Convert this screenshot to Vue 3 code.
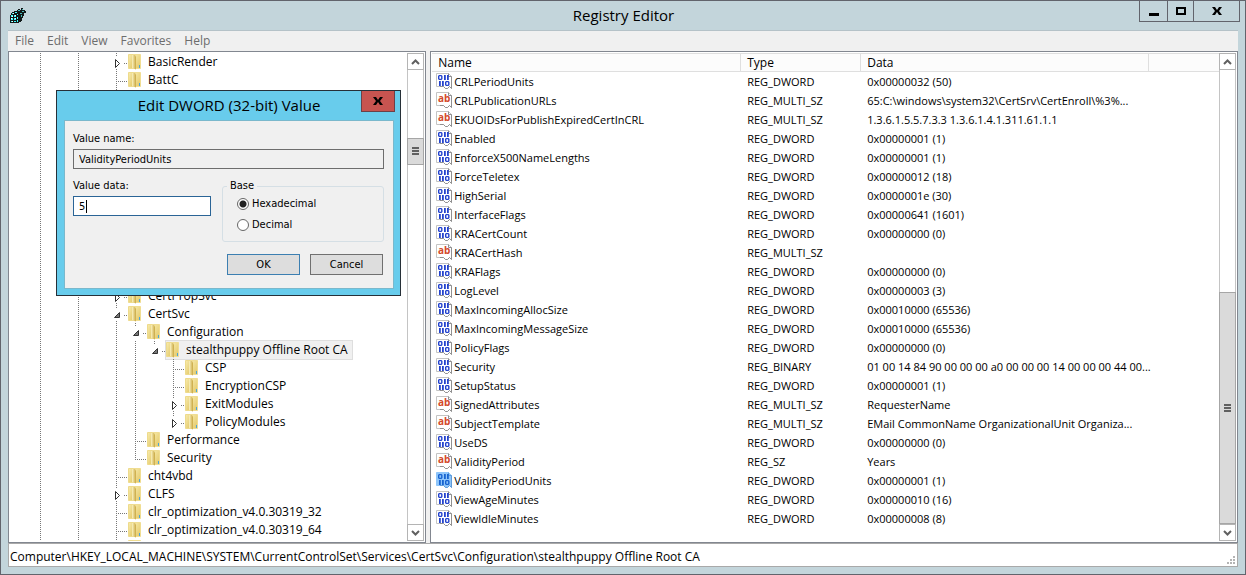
<script setup>
import { ref } from 'vue'

const menus = ['File', 'Edit', 'View', 'Favorites', 'Help']
const address = 'Computer\\HKEY_LOCAL_MACHINE\\SYSTEM\\CurrentControlSet\\Services\\CertSvc\\Configuration\\stealthpuppy Offline Root CA'
const base = ref('hex')
const valueName = ref('ValidityPeriodUnits')
const valueData = ref('5')

// g: one character per ancestor level, '|' where that branch continues
// n: 'c' collapsed, 'e' last collapsed, 'o' open, 't' leaf, 'l' last leaf, 'v' line only
const services = '| | '
const tree = [
  { g: services, n: 'c', t: 'BasicRender' },
  { g: services, n: 't', t: 'BattC' },
  ...Array.from({ length: 11 }, () => ({ g: services, n: 'v', t: '' })),
  { g: services, n: 'c', t: 'CertPropSvc' },
  { g: services, n: 'o', t: 'CertSvc' },
  { g: services + '|', n: 'o', t: 'Configuration' },
  { g: services + '||', n: 'o', t: 'stealthpuppy Offline Root CA', sel: true },
  { g: services + '|| ', n: 't', t: 'CSP' },
  { g: services + '|| ', n: 't', t: 'EncryptionCSP' },
  { g: services + '|| ', n: 'c', t: 'ExitModules' },
  { g: services + '|| ', n: 'e', t: 'PolicyModules' },
  { g: services + '|', n: 't', t: 'Performance' },
  { g: services + '|', n: 'l', t: 'Security' },
  { g: services, n: 't', t: 'cht4vbd' },
  { g: services, n: 'c', t: 'CLFS' },
  { g: services, n: 't', t: 'clr_optimization_v4.0.30319_32' },
  { g: services, n: 't', t: 'clr_optimization_v4.0.30319_64' },
  { g: services, n: 't', t: '' }
]

const D = 'REG_DWORD'
const M = 'REG_MULTI_SZ'
const values = [
  ['CRLPeriodUnits', D, '0x00000032 (50)'],
  ['CRLPublicationURLs', M, '65:C:\\windows\\system32\\CertSrv\\CertEnroll\\%3%...'],
  ['EKUOIDsForPublishExpiredCertInCRL', M, '1.3.6.1.5.5.7.3.3 1.3.6.1.4.1.311.61.1.1'],
  ['Enabled', D, '0x00000001 (1)'],
  ['EnforceX500NameLengths', D, '0x00000001 (1)'],
  ['ForceTeletex', D, '0x00000012 (18)'],
  ['HighSerial', D, '0x0000001e (30)'],
  ['InterfaceFlags', D, '0x00000641 (1601)'],
  ['KRACertCount', D, '0x00000000 (0)'],
  ['KRACertHash', M, ''],
  ['KRAFlags', D, '0x00000000 (0)'],
  ['LogLevel', D, '0x00000003 (3)'],
  ['MaxIncomingAllocSize', D, '0x00010000 (65536)'],
  ['MaxIncomingMessageSize', D, '0x00010000 (65536)'],
  ['PolicyFlags', D, '0x00000000 (0)'],
  ['Security', 'REG_BINARY', '01 00 14 84 90 00 00 00 a0 00 00 00 14 00 00 00 44 00...'],
  ['SetupStatus', D, '0x00000001 (1)'],
  ['SignedAttributes', M, 'RequesterName'],
  ['SubjectTemplate', M, 'EMail CommonName OrganizationalUnit Organiza...'],
  ['UseDS', D, '0x00000000 (0)'],
  ['ValidityPeriod', 'REG_SZ', 'Years'],
  ['ValidityPeriodUnits', D, '0x00000001 (1)'],
  ['ViewAgeMinutes', D, '0x00000010 (16)'],
  ['ViewIdleMinutes', D, '0x00000008 (8)']
]
const isText = (type) => type === M || type === 'REG_SZ'
</script>

<template>
  <div class="window">
    <svg class="defs" width="0" height="0" aria-hidden="true">
      <defs>
        <linearGradient id="fold" x1="0" x2="1">
          <stop offset="0" stop-color="#fbf3c2" />
          <stop offset="1" stop-color="#c9a741" />
        </linearGradient>
        <linearGradient id="sheet" x1="0" x2="1" y2="1">
          <stop offset="0" stop-color="#f8ecae" />
          <stop offset="1" stop-color="#e2c664" />
        </linearGradient>
      </defs>
    </svg>

    <header class="titlebar">
      <svg class="app-icon" width="16" height="16" viewBox="0 0 16 16" shape-rendering="crispEdges">
        <path d="M1 5h1V4h2V3h5v2h2v3h1v5h-1v1H9v1H0V7h1z" fill="#101818" />
        <path d="M2 5h2v1H2zM5 4h2v1H5zM1 7h2v2H1zM4 7h2v2H4zM7 6h2v1H7zM1 10h2v2H1zM4 10h2v2H4zM7 9h1v2H7zM1 13h2v1H1zM4 13h2v1H4zM7 12h1v2H7z" fill="#4ff" />
        <path d="M3 5h1v1H3zM2 8h1v1H2zM5 10h1v1H5zM2 13h1v1H2zM5 7h1v1H5zM1 10h1v1H1z" fill="#fff" />
        <path d="M8 1h2v1h1V0h2v2h2v1h1v2h-2v3h-1v2h-3V7H8V4H7V2h1z" fill="#101818" />
        <path d="M8 2h2v1H8zM12 3h2v1h-2zM10 5h2v1h-2zM11 7h1v2h-1zM12 1h1v1h-1z" fill="#4bbcbc" />
      </svg>
      <h1 class="title">Registry Editor</h1>
      <div class="controls">
        <button class="ctl" aria-label="Minimize"><svg width="10" height="9" viewBox="0 0 10 9"><path d="M0 6h10v3H0z" /></svg></button>
        <button class="ctl mid" aria-label="Maximize"><svg width="10" height="9" viewBox="0 0 10 9"><path d="M0 0h10v8H0zM2 2v4h6V2z" fill-rule="evenodd" /></svg></button>
        <button class="ctl wide" aria-label="Close"><svg width="10" height="9" viewBox="0 0 10 9"><path d="M0 0h3l2 3 2-3h3L7 4l3 4H7L5 5 3 8H0l3-4z" /></svg></button>
      </div>
    </header>

    <nav class="menubar">
      <button v-for="m in menus" :key="m" class="menu">{{ m }}</button>
    </nav>

    <main class="panes">
      <section class="pane tree-pane">
        <ul class="tree">
          <li v-for="(r, i) in tree" :key="i" class="node">
            <svg v-for="(c, k) in r.g.split('')" :key="k" class="guide" width="19" height="18" viewBox="0 0 19 18">
              <path v-if="c === '|' && k < 6" class="dots" d="M9.500 0V18" />
            </svg>
            <svg class="guide" width="21" height="18" viewBox="0 0 21 18">
              <path v-if="r.n === 't' || r.n === 'v'" class="dots" d="M9.500 0V18" />
              <path v-if="r.n === 'l'" class="dots" d="M9.500 0V10" />
              <path v-if="'tl'.includes(r.n)" class="dots" d="M9 10.500H21" />
              <path v-if="'ceo'.includes(r.n)" class="dots" d="M17 10.500H21M9.500 0V4" />
              <path v-if="r.n === 'c' || (r.n === 'o' && !r.g.endsWith('|'))" class="dots" d="M9.500 16V18" />
              <path v-if="'ce'.includes(r.n)" d="M8.500 6.500V14.500L12.500 10.500Z" fill="#fff" stroke="#333" />
              <path v-if="r.n === 'o'" d="M12.500 7.500V12.500H7.500Z" fill="#777" stroke="#333" />
            </svg>
            <span v-if="r.n !== 'v'" class="entry" :class="{ selected: r.sel }">
              <svg class="folder" width="13" height="16" viewBox="0 0 13 16">
                <path d="M5.500 0.500H12.500v14H5.500z" fill="url(#sheet)" stroke="#f0dd92" />
                <path d="M0.500 0.500H5.500v14H0.500z" fill="url(#sheet)" stroke="#eedb8c" />
                <path d="M4 1h3l1 2v12.500L4 14z" fill="url(#fold)" />
                <path d="M11 11h1v3h-1z" fill="#4aa5dc" />
              </svg>
              <span v-if="r.t">{{ r.t }}</span>
            </span>
          </li>
        </ul>
        <div class="scrollbar">
          <button class="arrow" aria-label="Scroll up"><svg width="9" height="6" viewBox="0 0 9 6"><path d="M1 5l3.500-3.500L8 5" /></svg></button>
          <div class="track tree-track"><div class="thumb"><i></i><i></i><i></i></div></div>
          <button class="arrow" aria-label="Scroll down"><svg width="9" height="6" viewBox="0 0 9 6"><path d="M1 1l3.500 3.500L8 1" /></svg></button>
        </div>
      </section>

      <section class="pane list-pane">
        <div class="list">
          <table>
            <colgroup><col class="c-name"><col class="c-type"><col class="c-data"><col></colgroup>
            <thead>
              <tr><th>Name</th><th>Type</th><th>Data</th><th></th></tr>
            </thead>
            <tbody>
              <tr v-for="v in values" :key="v[0]" :class="{ picked: v[0] === valueName }">
                <td>
                  <span class="value">
                    <svg width="16" height="17" viewBox="0 0 16 17">
                      <path class="page" d="M0.500 0.500H12.500L15.500 3.500V15.500L13.500 13.500L11.500 15.500H9.500L7.500 13.500H0.500Z" />
                      <path class="edge" d="M12.500 0.500V3.500H15.500V15.500L13.500 13.500L11.500 15.500H9.500L7.500 13.500H4" />
                      <text v-if="isText(v[1])" x="2" y="10" class="ab">ab</text>
                      <path v-else class="bits" fill-rule="evenodd" d="M2 3l1-1h2.500l1 1v3l-1 1H3l-1-1zM3.400 3.200v2.600h1.700V3.200zM8 2h1.800v5H8zM11 2h1.800v5H11zM3 8h1.800v5H3zM6 8h1.800v5H6zM9 9l1-1h2.500l1 1v3l-1 1H10l-1-1zM10.400 9.200v2.600h1.700V9.200z" />
                    </svg>
                    <span>{{ v[0] }}</span>
                  </span>
                </td>
                <td>{{ v[1] }}</td>
                <td>{{ v[2] }}</td>
                <td></td>
              </tr>
            </tbody>
          </table>
        </div>
        <div class="scrollbar">
          <button class="arrow" aria-label="Scroll up"><svg width="9" height="6" viewBox="0 0 9 6"><path d="M1 5l3.500-3.500L8 5" /></svg></button>
          <div class="track list-track"><div class="thumb"><i></i><i></i><i></i></div></div>
          <button class="arrow" aria-label="Scroll down"><svg width="9" height="6" viewBox="0 0 9 6"><path d="M1 1l3.500 3.500L8 1" /></svg></button>
        </div>
      </section>
    </main>

    <footer class="status">
      <span>{{ address }}</span>
      <svg class="grip" width="10" height="10" viewBox="0 0 10 10" fill="#b4b4b4">
        <path d="M7 0h2v2H7zM7 3h2v2H7zM4 3h2v2H4zM7 6h2v2H7zM4 6h2v2H4zM1 6h2v2H1z" />
      </svg>
    </footer>

    <form class="dialog" role="dialog" aria-labelledby="dlg-title" @submit.prevent>
      <div class="dialog-bar">
        <h2 id="dlg-title">Edit DWORD (32-bit) Value</h2>
        <button type="button" class="dialog-close" aria-label="Close"><svg width="10" height="8" viewBox="0 0 10 8"><path d="M0 0h3l2 3 2-3h3L7 4l3 4H7L5 5 3 8H0l3-4z" /></svg></button>
      </div>
      <div class="dialog-body">
        <label for="vname">Value name:</label>
        <input id="vname" v-model="valueName" class="box" type="text" readonly>
        <div class="columns">
          <div class="data">
            <label for="vdata">Value data:</label>
            <input id="vdata" v-model="valueData" class="box active" type="text">
            <span class="caret"></span>
          </div>
          <fieldset>
            <legend>Base</legend>
            <label class="radio"><input v-model="base" type="radio" name="base" value="hex"><span>Hexadecimal</span></label>
            <label class="radio"><input v-model="base" type="radio" name="base" value="dec"><span>Decimal</span></label>
          </fieldset>
        </div>
        <div class="actions">
          <button type="submit" class="btn primary">OK</button>
          <button type="button" class="btn">Cancel</button>
        </div>
      </div>
    </form>
  </div>
</template>

<style>
html, body, #app { height: 100%; }
body { overflow: hidden; }
</style>

<style scoped>
* { box-sizing: border-box; }
.window {
  position: relative;
  display: flex;
  flex-direction: column;
  height: 100%;
  padding: 0 7px 7px;
  border: 1px solid #62646c;
  background: #c3d5db;
  color: #000;
  font: 12px/18px "Open Sans", "Noto Sans", sans-serif;
}
.defs { position: absolute; }
button, input { font: inherit; color: inherit; margin: 0; }
button { padding: 0; border: 0; background: none; }
h1, h2, ul { margin: 0; padding: 0; font-weight: 400; }

.titlebar { display: flex; align-items: flex-start; height: 29px; flex: none; margin-right: -2px; }
.app-icon { margin: 7px 0 0 2px; }
.title { flex: 1; padding-left: 82px; text-align: center; font-size: 15px; line-height: 28px; }
.controls { display: flex; border: 1px solid #62646c; border-top: 0; }
.ctl { display: flex; align-items: center; justify-content: center; width: 28px; height: 20px; border-right: 1px solid #62646c; }
.ctl.mid { width: 26px; }
.ctl.wide { width: 45px; border-right: 0; }

.menubar { display: flex; gap: 13px; height: 21px; flex: none; padding: 0 7px; border-top: 1px solid #b5c2c8; background: #f0f0f0; }
.menu { color: #6d6d6d; line-height: 20px; }

.panes { display: flex; gap: 4px; flex: 1; min-height: 0; background: #f0f0f0; }
.pane { display: flex; min-width: 0; padding: 1px; border: 1px solid #828790; background: #fff; }
.tree-pane { flex: 0 0 34%; }
.list-pane { flex: 1; }

.tree { flex: 1; min-width: 0; overflow: hidden; padding-left: 21px; list-style: none; }
.node { display: flex; height: 18px; white-space: nowrap; }
.guide { flex: none; }
.dots { fill: none; stroke: #777; stroke-dasharray: 1 1; }
.entry { display: flex; align-items: center; gap: 7px; height: 18px; padding-right: 4px; line-height: 18px; }
.entry.selected { background: #f0f0f0; outline: 1px solid #dedede; }
.folder { flex: none; }

.scrollbar { display: flex; flex-direction: column; flex: none; width: 17px; }
.arrow { display: flex; align-items: center; justify-content: center; height: 17px; flex: none; border: 1px solid #b4b4b4; background: #fff; }
.arrow path { fill: none; stroke: #606060; stroke-width: 2; }
.track { display: flex; flex-direction: column; flex: 1; border: solid #c4c4c4; border-width: 0 1px; }
.thumb { display: flex; flex-direction: column; align-items: center; justify-content: center; gap: 1px; margin: 0 -1px; border: 1px solid #a6a6a6; background: #dadada; }
.thumb i { width: 7px; height: 2px; background: #606060; }
.tree-track::before { content: ""; flex: 68; }
.tree-track::after { content: ""; flex: 361; }
.tree-track .thumb { height: 27px; flex: none; }
.list-track::before { content: ""; flex: 223; }
.list-track .thumb { flex: 232; }

.list { flex: 1; min-width: 0; overflow: hidden; }
table { width: 100%; border-collapse: separate; border-spacing: 0; table-layout: fixed; }
.c-name { width: 309px; }
.c-type { width: 120px; }
.c-data { width: 288px; }
th { height: 19px; padding: 0 6px; border: solid #dfdfdf; border-width: 1px 1px 1px 0; background: #fcfcfc; text-align: left; font-weight: 400; line-height: 17px; }
th:last-child { border-right: 0; }
tbody { font-size: 11px; }
td { height: 19px; padding: 0 0 0 6px; line-height: 19px; white-space: nowrap; }
td:first-child { padding-left: 4px; }
.value { display: flex; align-items: center; gap: 2px; height: 19px; }
.value svg { flex: none; }
.page { fill: #fff; stroke: #c4c4c4; }
.edge { fill: none; stroke: #909090; }
.bits { fill: #2443ce; }
.picked .page { fill: #8ec5fa; stroke: #8ec5fa; }
.picked .edge { stroke: #5f9bd8; }
.picked .bits { fill: #1763d0; }
.ab { font: bold 10px "Open Sans", sans-serif; fill: #d3492a; }

.status { display: flex; align-items: center; justify-content: space-between; flex: none; height: 24px; padding: 3px 1px 0; border: 1px solid #a9a9a9; background: #fff; white-space: nowrap; }
.grip { align-self: flex-end; }

.dialog { position: absolute; left: 55px; top: 89px; width: 345px; padding: 0 6px 6px 7px; border: 1px solid #263038; background: #68ccec; font: 11px/14px "DejaVu Sans Condensed", sans-serif; }
.dialog-bar { position: relative; display: flex; justify-content: center; height: 29px; }
.dialog-bar h2 { font: 15px/28px "Open Sans", "Noto Sans", sans-serif; }
.dialog-close { position: absolute; right: -1px; top: 0; display: flex; align-items: center; justify-content: center; width: 34px; height: 21px; border: 1px solid #6d4048; border-top: 0; background: #c75450; }
.dialog-body { display: flex; flex-direction: column; padding: 11px 9px 13px 8px; border: 1px solid #7ab8cc; background: #f0f0f0; }
.box { display: block; width: 100%; height: 20px; margin-top: 3px; padding: 0 5px; border: 1px solid #6d6d6d; border-radius: 0; background: #f0f0f0; outline: 0; }
.box.active { border-color: #2a6496; background: #fff; }
.columns { display: flex; align-items: flex-start; gap: 11px; margin-top: 10px; }
.data { position: relative; width: 138px; }
.caret { position: absolute; left: 13px; top: 21px; width: 1px; height: 13px; background: #000; }
fieldset { flex: 1; min-width: 0; margin: 0; padding: 0 14px 6px; border: 1px solid #d5dfe5; border-radius: 3px; }
legend { margin-left: -10px; padding: 0 3px; line-height: 14px; }
.radio { display: flex; align-items: center; gap: 3px; height: 21px; }
.radio input { appearance: none; width: 12px; height: 12px; border: 1px solid #666; border-radius: 50%; background: #fff; }
.radio input:checked { background: radial-gradient(circle, #222 3px, #fff 4px); }
.actions { display: flex; justify-content: flex-end; gap: 10px; margin-top: 12px; padding-right: 1px; }
.btn { width: 73px; height: 21px; border: 1px solid #707070; background: #dddddd; }
.btn.primary { border-color: #3c7fb1; }
</style>
